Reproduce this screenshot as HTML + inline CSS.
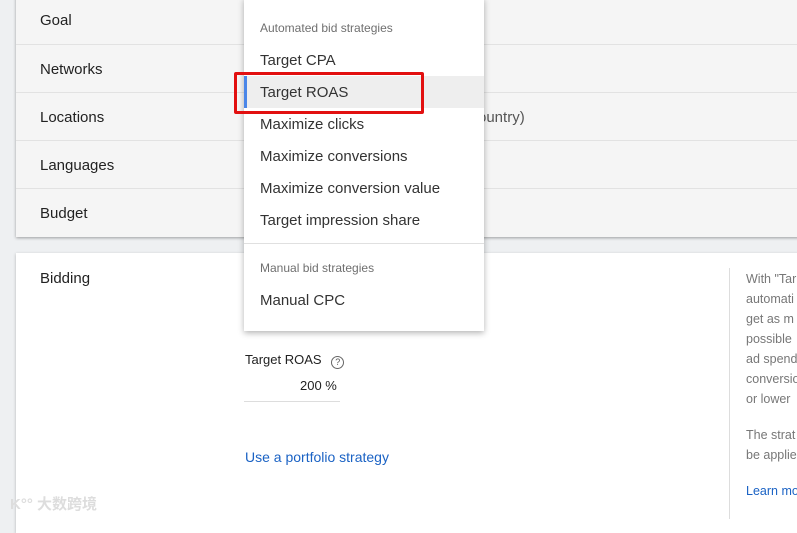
<!DOCTYPE html>
<html><head><style>
body{margin:0;width:797px;height:519px;overflow:hidden;background:#eef0f2;font-family:"Liberation Sans",Roboto,sans-serif;position:relative}
.card1{position:absolute;left:16px;top:-4px;width:800px;height:241px;background:#f5f5f5;box-shadow:0 1px 3px rgba(0,0,0,.35)}
.row{position:absolute;left:16px;width:781px;border-top:1px solid #e2e2e2;font-size:15px;color:#222}
.row span{position:absolute;left:24px}
.card2{position:absolute;left:16px;top:253px;width:800px;height:280px;background:#fff;box-shadow:0 1px 3px rgba(0,0,0,.25)}
.t{position:absolute;white-space:nowrap}
.menu{position:absolute;left:244px;top:-2px;width:240px;height:333px;background:#fff;box-shadow:0 2px 6px rgba(0,0,0,.3)}
.mi{position:absolute;left:16px;font-size:15px;color:#333}
.mh{position:absolute;left:16px;font-size:12px;color:#6f6f6f}
.side{position:absolute;left:746px;font-size:12.5px;color:#777;line-height:20px;top:269px;white-space:nowrap}
</style></head><body>
<div class="card1"></div>
<div class="t" style="left:40px;top:12px;font-size:15px;color:#222">Goal</div>
<div class="row" style="top:44px;height:48px"><span style="top:16px">Networks</span></div>
<div class="row" style="top:92px;height:48px"><span style="top:16px">Locations</span><span style="left:462px;top:16px;color:#555">ountry)</span></div>
<div class="row" style="top:140px;height:48px"><span style="top:16px">Languages</span></div>
<div class="row" style="top:188px;height:48px"><span style="top:16px">Budget</span></div>
<div class="card2"></div>
<div class="t" style="left:40px;top:270px;font-size:15px;color:#222">Bidding</div>
<div class="t" style="left:245px;top:352px;font-size:13px;color:#222">Target ROAS <span style="display:inline-block;width:11px;height:11px;border:1.3px solid #666;border-radius:50%;font-size:9px;line-height:11px;text-align:center;color:#555;margin-left:6px;vertical-align:-1px">?</span></div>
<div class="t" style="left:300px;top:378px;font-size:13px;color:#222">200 %</div>
<div style="position:absolute;left:244px;top:401px;width:96px;height:1px;background:#ddd"></div>
<div class="t" style="left:245px;top:449px;font-size:14px;color:#1a62c4">Use a portfolio strategy</div>
<div style="position:absolute;left:729px;top:268px;width:1px;height:251px;background:#ddd"></div>
<div class="side">With "Tar<br>automati<br>get as m<br>possible<br>ad spend<br>conversio<br>or lower</div>
<div class="side" style="top:425px">The strat<br>be applie</div>
<div class="side" style="top:481px;color:#1a62c4">Learn mo</div>
<div class="t" style="left:10px;top:493px;font-size:15px;color:#ddd;font-family:'Liberation Sans','Noto Sans CJK SC',sans-serif;font-weight:bold">K°° 大数跨境</div>
<div class="menu">
<div class="mh" style="top:23px">Automated bid strategies</div>
<div class="mi" style="top:54px">Target CPA</div>
<div style="position:absolute;left:0;top:78px;width:240px;height:32px;background:#eee"></div>
<div style="position:absolute;left:0;top:78px;width:3px;height:32px;background:#4a86e8"></div>
<div class="mi" style="top:86px">Target ROAS</div>
<div class="mi" style="top:118px">Maximize clicks</div>
<div class="mi" style="top:150px">Maximize conversions</div>
<div class="mi" style="top:182px">Maximize conversion value</div>
<div class="mi" style="top:214px">Target impression share</div>
<div style="position:absolute;left:0;top:245px;width:240px;height:1px;background:#e0e0e0"></div>
<div class="mh" style="top:263px">Manual bid strategies</div>
<div class="mi" style="top:294px">Manual CPC</div>
</div>
<div style="position:absolute;left:234px;top:72px;width:184px;height:36px;border:3px solid #e21010;border-radius:2px"></div>
</body></html>
